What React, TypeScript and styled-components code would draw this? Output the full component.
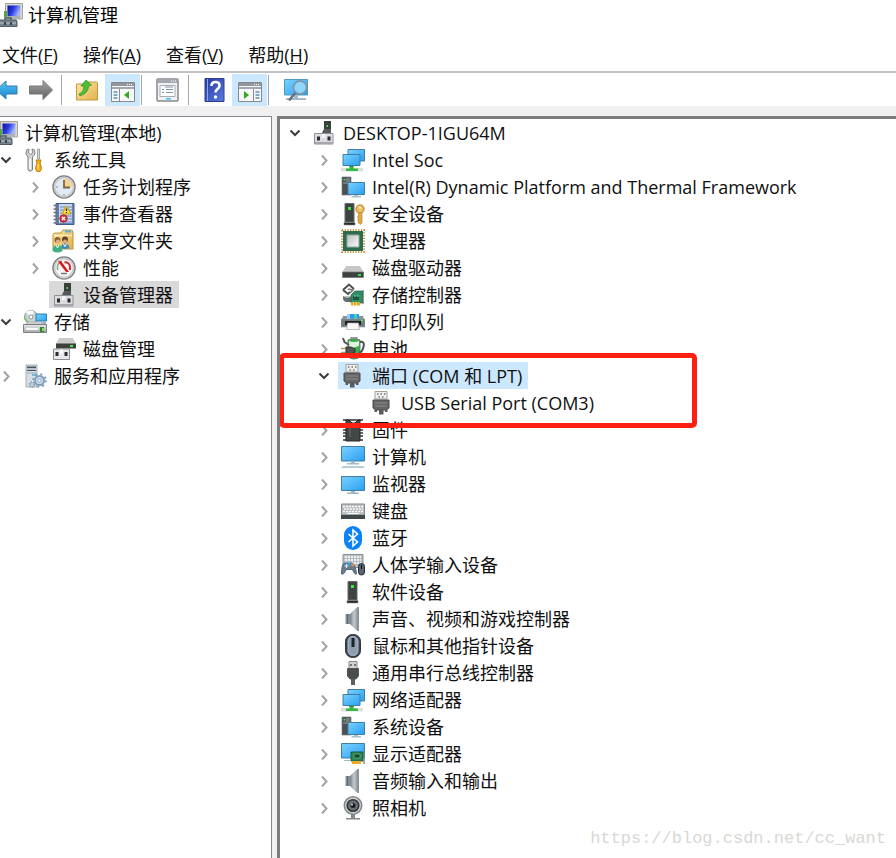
import React from 'react';
import styled, { createGlobalStyle } from 'styled-components';

const GlobalStyle = createGlobalStyle`
  *, *::before, *::after { box-sizing: border-box; }
  html, body, #root { height: 100%; }
  body {
    margin: 0;
    overflow: hidden;
    background: #fff;
    color: #101010;
    font: 18px/27px 'Open Sans', 'Noto Sans CJK SC', sans-serif;
  }
  button { font: inherit; color: inherit; border: 0; background: none; padding: 0; margin: 0; }
`;

/* ---------- layout ---------- */

const Window = styled.div`
  display: flex;
  flex-direction: column;
  height: 100vh;
  overflow: hidden;
`;

const TitleBar = styled.header`
  display: flex;
  align-items: center;
  gap: 5px;
  height: 30px;
  flex: none;
  margin-left: -1px;
`;

const Title = styled.h1`
  margin: 0;
  font-size: 18px;
  font-weight: 400;
  color: #000;
`;

const MenuBar = styled.nav`
  display: flex;
  align-items: center;
  gap: 25px;
  flex: none;
  height: 43px;
  padding: 9px 2px 0;
  border-bottom: 2px solid #c2c2c2;
`;

const MenuButton = styled.button`
  white-space: nowrap;
`;

const ToolBar = styled.div`
  display: flex;
  align-items: center;
  flex: none;
  height: 33px;
  background: #fff;
`;

const ToolButton = styled.button<{ $active?: boolean; $wide?: boolean }>`
  display: flex;
  align-items: center;
  justify-content: center;
  width: ${p => (p.$wide ? 39 : 35)}px;
  height: 32px;
  background: ${p => (p.$active ? '#cce8ff' : 'transparent')};
`;

const Separator = styled.span<{ $before?: number; $after?: number }>`
  width: 1px;
  height: 30px;
  margin: 0 ${p => p.$after ?? 0}px 0 ${p => p.$before ?? 0}px;
  background: #a6a6a6;
`;

const NavGroup = styled.div`
  display: flex;
  gap: 10px;
  margin-left: -5px;
  align-items: center;
`;

const NavButton = styled.button`
  display: flex;
  width: 24px;
  height: 32px;
  align-items: center;
`;

const Body = styled.div`
  display: flex;
  flex: 1;
  min-height: 0;
  padding-top: 10px;
  gap: 5px;
  background: #f0f0f0;
`;

const SidePane = styled.aside`
  flex: none;
  width: 272px;
  overflow: hidden;
  background: #fff;
  border-top: 1px solid #828790;
  border-right: 1px solid #828790;
  padding-top: 2px;
`;

const MainPane = styled.main`
  flex: 1;
  min-width: 0;
  overflow: hidden;
  position: relative;
  background: #fff;
  border: solid #7c7c7c;
  border-width: 3px 0 0 3px;
`;

const Tree = styled.ul<{ $scrolled?: boolean }>`
  list-style: none;
  margin: 0 0 0 ${p => (p.$scrolled ? -37 : 1)}px;
  padding: 0;
`;

const SubTree = styled.ul`
  list-style: none;
  margin: 0;
  padding: 0 0 0 29px;
`;

const Node = styled.li`
  position: relative;
`;

const Row = styled.div`
  display: flex;
  height: 27px;
`;

const Toggle = styled.button`
  display: flex;
  align-items: center;
  justify-content: center;
  width: 28px;
  height: 27px;
  flex: none;
`;

const ToggleSpace = styled.span`
  width: 28px;
  flex: none;
`;

const Item = styled.button<{ $tint?: string }>`
  display: flex;
  align-items: center;
  gap: 7px;
  height: 27px;
  padding: 0 6px 0 3px;
  white-space: nowrap;
  background: ${p => p.$tint ?? 'transparent'};
`;

const Label = styled.span`
  padding-top: 2px;
`;

const Callout = styled.span`
  position: absolute;
  top: -9px;
  left: -31px;
  width: 418px;
  height: 75px;
  border: 5px solid #ff2012;
  border-radius: 5px;
  pointer-events: none;
  z-index: 1;
`;

const Watermark = styled.span`
  position: absolute;
  right: 10px;
  bottom: 6px;
  font: 17px/27px 'Liberation Mono', monospace;
  color: #d8d8d4;
`;

const Svg = styled.svg`
  display: block;
  flex: none;
`;

/* ---------- drawings ---------- */

const Pic = ({ children }: { children: React.ReactNode }) => (
  <Svg width="24" height="24" viewBox="0 0 24 24" aria-hidden="true">{children}</Svg>
);

const Gradients = () => (
  <Svg width="0" height="0" aria-hidden="true">
    <defs>
      <linearGradient id="screen" x1="0" y1="0" x2="1" y2="1"><stop stopColor="#7ad2ff" /><stop offset="1" stopColor="#2a9ff2" /></linearGradient>
      <linearGradient id="deep" x1="0" y1="0" x2="1" y2="0.4"><stop stopColor="#0a12a0" /><stop offset=".5" stopColor="#2a3ae0" /><stop offset="1" stopColor="#a9b8ff" /></linearGradient>
      <linearGradient id="metal" x1="0" y1="0" x2="0" y2="1"><stop stopColor="#e6e8ea" /><stop offset="1" stopColor="#a4a8ac" /></linearGradient>
      <linearGradient id="silver" x1="0" y1="0" x2="1" y2="1"><stop stopColor="#b9bcbe" /><stop offset=".6" stopColor="#e3e4e5" /><stop offset="1" stopColor="#f4f4f4" /></linearGradient>
      <linearGradient id="cone" x1="0" y1="0" x2="1" y2="0"><stop stopColor="#77828c" /><stop offset=".5" stopColor="#c3c9ce" /><stop offset="1" stopColor="#8b949c" /></linearGradient>
      <linearGradient id="gold" x1="0" y1="0" x2="1" y2="1"><stop stopColor="#ffe9a0" /><stop offset="1" stopColor="#e3b04b" /></linearGradient>
      <linearGradient id="blue" x1="0" y1="0" x2="0" y2="1"><stop stopColor="#5cc6f5" /><stop offset="1" stopColor="#1484d0" /></linearGradient>
      <linearGradient id="gray" x1="0" y1="0" x2="0" y2="1"><stop stopColor="#a8a8a8" /><stop offset="1" stopColor="#5e5e5e" /></linearGradient>
      <linearGradient id="book" x1="0" y1="0" x2="1" y2="1"><stop stopColor="#2438a0" /><stop offset="1" stopColor="#5d7de0" /></linearGradient>
    </defs>
  </Svg>
);

const Chevron = ({ open }: { open?: boolean }) => (
  <Svg width="12" height="12" viewBox="0 0 12 12" aria-hidden="true">
    {open
      ? <path d="M1.5 3.500 6 8l4.500-4.500" fill="none" stroke="#3c3c3c" strokeWidth="2" />
      : <path d="M4 1.500 8.500 6.500 4 11.500" fill="none" stroke="#a3a3a3" strokeWidth="2" />}
  </Svg>
);

const ComputerIcon = () => (
  <Pic>
    <path d="M6.500 .500h17v15.500h-17z" fill="#d8d8cf" stroke="#a4a49a" />
    <path d="M8.500 2.500h13v11h-13z" fill="url(#deep)" />
    <path d="M5 8h3v6H5z" fill="#53a540" />
    <path d="M10 13h8v-2l3 2v3H9z" fill="#aab2b8" />
    <path d="M1 17h16l1 1v5.500H0V18z" fill="#77838c" stroke="#4f5a62" />
    <path d="M6 17v-2h6v2" fill="none" stroke="#4f5a62" strokeWidth="1.500" />
    <path d="M1 20h16" stroke="#b9c3ca" /><path d="M6 19v3M12 19v3" stroke="#394148" strokeWidth="2" />
  </Pic>
);

const ToolsIcon = () => (
  <Pic>
    <path d="M6 1 3.500 2 3 6l2 3v13q2 2.500 4.500 0V9l2.500-3-.5-4L9 1l.5 4-2 1.500L5.500 5z" fill="#d3d5d6" stroke="#7d8184" />
    <path d="M7 11v10" stroke="#fff" strokeWidth="1.500" />
    <path d="M14.500 1h2v10h-2z" fill="#d5dade" stroke="#8c9297" strokeWidth=".8" />
    <path d="M13 12h5l-1 3 1.500 5q-.5 4-3 4t-3-4l1.500-5z" fill="#f6b21a" stroke="#c27c08" />
    <path d="M15 16v5" stroke="#ffe487" />
  </Pic>
);

const ClockIcon = () => (
  <Pic>
    <circle cx="12" cy="12" r="11" fill="#dfeaf5" stroke="#7d7f81" strokeWidth="1.500" />
    <circle cx="12" cy="12" r="9.500" fill="none" stroke="#c9cbcd" strokeWidth="1.800" />
    <path d="M12 3.500a8.500 8.500 0 0 1 8.500 8.500H12z" fill="#f5d394" />
    <path d="M12 5v7.500h6" fill="none" stroke="#7b6540" strokeWidth="1.800" />
    <path d="M12 19v1.500M4 12h1.500" stroke="#6b7e92" />
  </Pic>
);

const EventIcon = () => (
  <Pic>
    <path d="M4 1.500h18v21H4z" fill="#6684b7" stroke="#405b8c" />
    <path d="M7 2h13v19H7z" fill="#c6d6ed" />
    <path d="M8 5h12M8 8h12M8 11h12M8 14h12M8 17h12M8 20h12" stroke="#7490bf" />
    <path d="M1.500 3.500h5M1.500 7h5M1.500 10.500h5M1.500 14h5M1.500 17.500h5M1.500 21h5" stroke="#6f7478" strokeWidth="1.500" />
    <path d="m14.500 4 4.500 8h-9z" fill="#ffde3b" stroke="#c3a100" />
    <path d="M14.500 6.500v2.500M14.500 10v1" stroke="#302800" strokeWidth="1.300" />
    <circle cx="11.500" cy="16.500" r="3.700" fill="#dd3a43" stroke="#b51e28" />
    <path d="m10 15 3 3m0-3-3 3" stroke="#fff" strokeWidth="1.300" />
  </Pic>
);

const SharedIcon = () => (
  <Pic>
    <path d="M1 6q0-2 2-2h6l2-3h8q2 0 2 2v17H1z" fill="url(#gold)" stroke="#bd9143" />
    <path d="M13 2.500h6" stroke="#4faee5" strokeWidth="2" />
    <path d="M2 6.500h18" stroke="#fff2c6" />
    <circle cx="5.500" cy="11" r="3" fill="#875f3c" /><circle cx="6" cy="12.500" r="2" fill="#e4b38b" />
    <circle cx="13" cy="10.500" r="3" fill="#604026" /><circle cx="13" cy="12.500" r="2" fill="#e0aa80" />
    <path d="M9 19q0-4.500 4-4.500t4.500 4.500q-4 2-8.500 0z" fill="#3d8fba" /><path d="M.5 22q0-6 5-6t5 6q-5 3-10 0z" fill="#3fae84" />
    <path d="m4 16 1.500 3L7 16m4.500-1 1.500 2.500 1.500-2.500" fill="none" stroke="#fff" />
  </Pic>
);

const GaugeIcon = () => (
  <Pic>
    <circle cx="12" cy="12" r="11" fill="#f7f8f6" stroke="#7d7f81" strokeWidth="1.500" />
    <circle cx="12" cy="12" r="9.500" fill="none" stroke="#c9cbcd" strokeWidth="1.800" />
    <path d="M5.500 14V9.500Q7 6 10 5.500" fill="none" stroke="#86a58a" strokeWidth="1.500" />
    <path d="M12.500 6q5 .5 5.500 4.500V14" fill="none" stroke="#d4282d" strokeWidth="2" />
    <path d="m6 5.500 3-.5 8 11h-3z" fill="#df161b" />
    <path d="M9 17.500h6" stroke="#777" strokeWidth="1.500" />
  </Pic>
);

const DeviceIcon = () => (
  <Pic>
    <path d="M12 0h7v13h-7z" fill="#39413d" /><path d="M10 11.500 12 8h7v5h-9z" fill="#565b59" />
    <path d="M14.500 4h1.500v2h-1.500z" fill="#46e353" />
    <path d="M2.500 12.500h18.500v10.500H2.500z" fill="#dcdce1" stroke="#909198" />
    <path d="M3 22h18" stroke="#a5a6ae" strokeWidth="2" />
    <path d="M5 15.500h3v4H5zM15.500 15.500h3v4h-3z" fill="#2a2c2e" />
    <path d="M10 13v4h3.500v-4" fill="#f4f4f6" />
  </Pic>
);

const StorageIcon = () => (
  <Pic>
    <circle cx="8" cy="7" r="6.500" fill="#cbd5d5" stroke="#8d9694" /><path d="M8 7 3 2.500A6.500 6.500 0 0 1 11 1.500z" fill="#fff" />
    <circle cx="8" cy="7" r="2" fill="#fff" stroke="#8d9694" /><path d="M2 8q2 5 5 5" fill="none" stroke="#76cd70" strokeWidth="2" />
    <path d="M13 4h10.500v7H13z" fill="url(#screen)" stroke="#277fad" /><path d="M14 13h9" stroke="#1c6f96" />
    <path d="m3 14 2-2h13l5 2z" fill="#e7e9ea" stroke="#999" strokeWidth=".7" />
    <path d="M.5 14.500h23v8H.5z" fill="url(#metal)" stroke="#7d8082" /><path d="M3 19h12" stroke="#f9f9f9" strokeWidth="2" />
    <path d="M17 17h4v5h-4z" fill="#37872c" /><path d="M19 18h2v3h-2z" fill="#75dd50" />
  </Pic>
);

const DiskManageIcon = () => (
  <Pic>
    <path d="M7 1h14l3 6H4z" fill="#c9cbcc" />
    <path d="M4 6.500h20v5H4z" fill="#3b403d" /><path d="M18 8h3v2h-3z" fill="#3ded46" />
    <path d="M1.500 12h16v10.500h-16z" fill="#e9e9ed" stroke="#8a8b90" />
    <path d="M3.500 15h3v4h-3zM12.500 15h3v4h-3z" fill="#2a2c2e" /><path d="M8 12.500v4h3v-4" fill="#fff" />
  </Pic>
);

const ServicesIcon = () => (
  <Pic>
    <path d="M3 1h11v22H3z" fill="#d6dfe5" stroke="#93a0a8" strokeWidth=".8" />
    <path d="M4 2.500h9v1.500H4zM4 6h9v1H4z" fill="#45525b" /><path d="M4 5h9M4 9h9" stroke="#9aa8b1" />
    <path d="M9 10h4v2H9z" fill="#78b6d9" />
    <circle cx="16.500" cy="16.500" r="4.500" fill="#d0e3f2" stroke="#7f9fba" strokeWidth="2" />
    <circle cx="16.500" cy="16.500" r="6.300" fill="none" stroke="#7f9fba" strokeWidth="2" strokeDasharray="2 2.950" />
    <circle cx="16.500" cy="16.500" r="1.800" fill="#fff" stroke="#7f9fba" />
    <circle cx="9" cy="20.500" r="2.500" fill="#b4cee1" stroke="#7f9fba" strokeDasharray="1.500 1" strokeWidth="1.500" />
  </Pic>
);

const NetworkIcon = () => (
  <Pic>
    <path d="M7 1.500h16.500V13H7z" fill="url(#screen)" stroke="#417da2" />
    <path d="M2 6.500h17v11H2z" fill="url(#screen)" stroke="#417da2" />
    <path d="M0 20h22v3.500H0z" fill="#dcdfdc" /><path d="M8.500 18h4v2.500H17V23H5v-2.500h3.500z" fill="#35ba40" />
    <path d="M8.500 18h4v1h-4z" fill="#268c30" />
  </Pic>
);

const SystemIcon = () => (
  <Pic>
    <path d="M1 2h9v18H1z" fill="#4b5054" stroke="#74797c" strokeWidth=".7" /><path d="M2.500 4h2v1.500h-2z" fill="#46e353" />
    <path d="M5 4h4M5 6h4M2 8h7" stroke="#a0a5a8" />
    <path d="M7 7.500h16.500v12H7z" fill="url(#screen)" stroke="#417da2" /><path d="M13 20h4v1h3v1.500h-9.500V21H13z" fill="#a5bfd1" />
  </Pic>
);

const Tower = ({ x }: { x: number }) => (
  <g transform={`translate(${x} 0)`}>
    <path d="M1 1.500h9V20H1z" fill="#3e4240" stroke="#656967" /><path d="M0 20.500h11V23H0z" fill="#24282a" stroke="#888" strokeWidth=".6" />
    <path d="M4 5h3v3H4z" fill="#38ef38" />
  </g>
);

const SecurityIcon = () => (
  <Pic>
    <Tower x={3} />
    <circle cx="19" cy="7" r="3.900" fill="#eec165" stroke="#cd983c" strokeWidth="1.500" /><circle cx="19" cy="5.500" r="1" fill="#fff" />
    <path d="M17.500 10.500h3.500V21L19 22.500 17.500 21z" fill="#e2ab42" stroke="#b78628" strokeWidth=".7" /><path d="M16 15h2M16 18h2" stroke="#c3922b" />
  </Pic>
);

const SoftwareIcon = () => <Pic><Tower x={6} /></Pic>;

const CpuIcon = () => (
  <Pic>
    <rect x="1" y="1" width="22" height="22" fill="none" stroke="#c69a4d" strokeWidth="2" strokeDasharray="1.300 1.400" />
    <path d="M2 2h20v20H2z" fill="#2f6c4e" />
    <path d="M6 6h12v12H6z" fill="url(#silver)" stroke="#8cad9b" />
  </Pic>
);

const DiskIcon = () => (
  <Pic>
    <path d="M5 10h14l3.500 6h-21z" fill="#c5c7c9" /><path d="M1.500 16h21v5.500h-21z" fill="#3d4140" stroke="#707373" strokeWidth=".7" />
    <path d="M17 18h3v2h-3z" fill="#31e342" />
  </Pic>
);

const ControllerIcon = () => (
  <Pic>
    <path d="m2 7 6-5.500L13 6M2 7l5 4 2-2" fill="none" stroke="#4d5151" strokeWidth="2" /><path d="m7 6 5 1-3 3" fill="none" stroke="#777" strokeWidth="1.500" />
    <path d="M2 13q4 3 9 0v6H5q-3-1-3-3z" fill="#666b6b" /><path d="M3 13.500h8" stroke="#bfc5c5" />
    <path d="M10 12l4-4h8v12H10z" fill="#2f9068" stroke="#246246" strokeWidth=".7" /><path d="M12 13h6v4h-6z" fill="#19593f" />
    <path d="M14 12v2M17 12v2" stroke="#99d1b1" /><path d="M22.500 7v14" stroke="#999" /><path d="M10 19h9v3.500h-9z" fill="#e5a527" />
    <path d="M12.500 19v4m3-4v4" stroke="#fff0be" strokeWidth=".7" />
  </Pic>
);

const PrinterIcon = () => (
  <Pic>
    <path d="M6 4h12v5H6z" fill="#2c9af2" /><path d="M13 4h3v5h-3z" fill="#3fd4ae" /><path d="M6 4h3v5H6z" fill="#92cfff" />
    <path d="M2 6h4v3H1zM18 6h4l1 3h-5z" fill="#8b9093" /><path d="M0 9h24v8H0z" fill="#73797c" stroke="#999fa2" strokeWidth=".6" />
    <path d="M4 11h16v4H4z" fill="#1b1e20" /><path d="m6.500 13-1 6.500h13l-1-6.500z" fill="#f8f8f8" stroke="#a4a9ac" strokeWidth=".7" /><path d="M20 9.500h2v2h-2z" fill="#49ec50" />
  </Pic>
);

const BatteryIcon = () => (
  <Pic>
    <path d="M10 0h6v2.500h-6z" fill="#b8bebe" stroke="#767c7c" /><path d="M7 3q6-2.500 12 0v17q-6 4-12 0z" fill="#35b04a" stroke="#6b7c70" />
    <path d="M8 4q5 2 10 0v5l-10 3z" fill="#dff2df" /><path d="M19 5q5-1 3.500 5T18 15" fill="none" stroke="#4c5554" strokeWidth="2" />
    <path d="M2 1l1.500 4L8 8" fill="none" stroke="#555" strokeWidth="2" />
    <path d="M0 11.500h5M0 15.500h5" stroke="#b29b60" strokeWidth="1.500" /><path d="M5 10h5l4 2v3l-4 2H5z" fill="#4f5555" stroke="#2d3232" />
  </Pic>
);

const PortIcon = () => (
  <Pic>
    <path d="M5 .500h12V8H5z" fill="#eeeeec" stroke="#a1a19e" /><path d="M7 3h1.500M10.500 3H12M14 3h1.500M8.500 6H10M12 6h1.500" stroke="#777" strokeWidth="1.300" />
    <path d="M3 9h16v8l-3 2H6l-3-2z" fill="#666" stroke="#4a4a4a" /><path d="M5 12h12M5 15h12" stroke="#8a8a8a" />
    <path d="M4.500 18h2.500v3H4.500zM15 18h2.500v3H15zM9 18.500h4.500v5H9z" fill="#5a5a5a" />
  </Pic>
);

const ChipIcon = () => (
  <Pic>
    <path d="M2 2h20M2 6h20M2 9h20M2 12h20M2 15h20M2 18h20M2 22h20" stroke="#333" strokeWidth="1.500" />
    <path d="M5 2h3l3 3h3l3-3h2v21H5z" fill="#444748" stroke="#242626" /><path d="M9 8v11" stroke="#6d7070" />
  </Pic>
);

const PcIcon = () => (
  <Pic>
    <path d="M.5 1.500h23v14.500H.5z" fill="url(#screen)" stroke="#417da2" /><path d="M10 16.500h4V18h4v1.500H6V18h4z" fill="#a4bacb" />
    <path d="M2 21h20l2 2H0z" fill="#b8ccda" />
  </Pic>
);

const MonitorIcon = () => (
  <Pic>
    <path d="M.5 4.500h23v14H.5z" fill="url(#screen)" stroke="#417da2" /><path d="M10 19h4v1.500h4V22H6v-1.500h4z" fill="#9eb5c5" />
  </Pic>
);

const KeyboardIcon = () => (
  <Pic>
    <path d="M.5 5h23v11H.5z" fill="#b9bdc0" stroke="#858a8d" /><path d="M0 16h24v4H0z" fill="#41484c" />
    <path d="M2 7.500h20M3 10h19M2 12.500h20" stroke="#f9f9f9" strokeWidth="1.500" strokeDasharray="2 1" /><path d="M6 14.500h12" stroke="#fff" />
  </Pic>
);

const BluetoothIcon = () => (
  <Pic>
    <rect x="3" y="0" width="18" height="24" rx="9" fill="#0b82f5" />
    <path d="m7.500 8 9 8-4.500 4V4l4.500 4-9 8" fill="none" stroke="#fff" strokeWidth="1.600" />
  </Pic>
);

const HidIcon = () => (
  <Pic>
    <path d="M2 1.500h20v13H2z" fill="#b7bec3" stroke="#899197" /><path d="M4 4h16M4 7h16M4 10h16" stroke="#fff" strokeWidth="1.500" strokeDasharray="2 1" />
    <path d="M.5 21q0-10 3-11h7q4 1 5 11-2 1-4-4.500H5q-2 5.500-4.500 4.500z" fill="#667c91" stroke="#54677a" /><path d="M5.500 11v4M3.500 13h4" stroke="#e6eef2" />
    <circle cx="8" cy="11" r="1.500" fill="#2ba6f4" /><circle cx="11.500" cy="12" r="1.500" fill="#f18c45" />
    <rect x="17.500" y="10.500" width="6" height="11.500" rx="3" fill="#586674" stroke="#24292e" /><path d="M20.500 12v4" stroke="#111" />
  </Pic>
);

const SpeakerIcon = () => (
  <Pic>
    <path d="M4.500 7h6v10h-6z" fill="#84919c" /><path d="M6.500 7v10" stroke="#5a6670" /><path d="m9 7 6-6h2v22h-2l-6-6z" fill="url(#cone)" /><path d="M16 0h2v24h-2z" fill="#8a949c" />
  </Pic>
);

const MouseIcon = () => (
  <Pic>
    <rect x="4.500" y=".5" width="15" height="23" rx="7" fill="#3b444c" stroke="#2c3339" /><rect x="7" y="2.500" width="10" height="19" rx="4.500" fill="#8ea0b0" stroke="#aebbc6" />
    <path d="M12 4v9" stroke="#1b2228" strokeWidth="3" />
  </Pic>
);

const UsbIcon = () => (
  <Pic>
    <path d="M8 .500h8V8H8z" fill="#d2d4d4" stroke="#888" /><path d="M10 3v2M14 3v2" stroke="#555" strokeWidth="1.500" />
    <path d="M6.500 7.500h11V15L15 18H9l-2.500-3z" fill="#4b4e4f" stroke="#555" /><path d="M10 18h4v6h-4z" fill="#5a5e5f" />
  </Pic>
);

const DisplayAdapterIcon = () => (
  <Pic>
    <path d="M.5 1.500h23v14.500H.5z" fill="url(#screen)" stroke="#417da2" /><path d="M10 10h12v9H10z" fill="#258653" stroke="#195e3a" />
    <path d="M13 12h6v4h-6z" fill="#17482e" stroke="#7bb391" strokeWidth=".7" /><path d="M23 8v14" stroke="#787c7c" strokeWidth="1.300" /><path d="M11 19h9v3h-9z" fill="#eeaa28" />
    <path d="M3 18.500h6" stroke="#9fb7c4" />
  </Pic>
);

const CameraIcon = () => (
  <Pic>
    <circle cx="12" cy="9.500" r="8.700" fill="#d0d2d3" stroke="#85888a" strokeWidth="1.600" /><circle cx="12" cy="9.500" r="5.800" fill="#6a7075" stroke="#33373a" strokeWidth="1.600" />
    <circle cx="12" cy="9.500" r="2.500" fill="#151c26" /><circle cx="11" cy="8.500" r="1" fill="#dceaff" /><path d="M10 18h4v4h5v1.500H5V22h5z" fill="#84888a" />
  </Pic>
);

const BackIcon = () => <Pic><path d="M1 12 11 3v5h11v8H11v5z" fill="url(#blue)" stroke="#337ba7" /></Pic>;
const ForwardIcon = () => <Pic><path d="M23.500 12 14 2.500V8H.5v8H14v5.500z" fill="url(#gray)" stroke="#777" /></Pic>;
const FolderUpIcon = () => (
  <Pic>
    <path d="M.5 6h8l2-2h10q1 0 1 1v17H.5z" fill="url(#gold)" stroke="#c29945" />
    <path d="M3 16q5-2 5-8H5L10 2l5.500 5-3 1q0 7-8.500 10z" fill="#4ac13c" stroke="#258b20" strokeWidth=".7" />
  </Pic>
);
const PaneIcon = ({ flip }: { flip?: boolean }) => (
  <Pic>
    <path d="M.5 4.500h23v19H.5z" fill="#f8f8f8" stroke="#868a90" /><path d="M1 5h22v3H1z" fill="#91959c" /><path d="M16 6.500h6" stroke="#fff" strokeDasharray="1 1" />
    <path d="M1 10h22" stroke="#a3a7ac" strokeWidth="2" />
    <path d={flip ? 'M15.500 11v12' : 'M8.500 11v12'} stroke="#868a90" />
    <path d={flip ? 'M17.500 14h4M17.500 17h4M17.500 20h4' : 'M2.500 14h4M2.500 17h4M2.500 20h4'} stroke="#5a8fc2" strokeWidth="1.500" />
    <path d={flip ? 'M6 13v8l5-4z' : 'M18 13v8l-5-4z'} fill="#35a925" />
  </Pic>
);
const PropsIcon = () => (
  <Pic>
    <rect x="1" y="1" width="21" height="22" rx="1" fill="#f0f1f3" stroke="#85898f" strokeWidth="1.500" /><path d="M2 3.500h19" stroke="#a3a7ae" strokeWidth="3" /><path d="M15 3h5" stroke="#fff" strokeDasharray="1 1" />
    <path d="M4 7.500h15v11H4z" fill="#fff" stroke="#a9adb3" /><path d="M6 11.500h2m2 0h7M6 14.500h2m2 0h7M9 9h8" stroke="#7d95ac" />
    <path d="M10 20h5v1.500h-5z" fill="#38c4f0" />
  </Pic>
);
const HelpIcon = () => (
  <Pic>
    <path d="M2 .500h19v23H2z" fill="url(#book)" stroke="#2b3c91" /><path d="M4.500 1v22" stroke="#92a7e8" />
    <path d="M8.500 8q0-4 4-4t4 3.500q0 2-2 3.500t-2 3.500" fill="none" stroke="#fff" strokeWidth="2.600" /><circle cx="12.500" cy="19" r="1.700" fill="#fff" />
  </Pic>
);
const ScanIcon = () => (
  <Pic>
    <path d="M.5 1.500h23V17H.5z" fill="url(#screen)" stroke="#4b9bc5" /><path d="M10 17h4v3h8v2H2v-2h8z" fill="#a5bac7" />
    <path d="m12 14-7 8.500" stroke="#65727b" strokeWidth="2.500" /><circle cx="16" cy="9.500" r="6.500" fill="#8ed6fa" stroke="#8292a0" strokeWidth="1.500" />
  </Pic>
);

/* ---------- tree ---------- */

type NodeData = {
  label: string;
  icon: () => React.ReactElement;
  open?: boolean;
  leaf?: boolean;
  tint?: string;
  marked?: boolean;
  children?: NodeData[];
};

const consoleTree: NodeData[] = [{
  label: '计算机管理(本地)', icon: ComputerIcon, leaf: true, children: [
    {
      label: '系统工具', icon: ToolsIcon, open: true, children: [
        { label: '任务计划程序', icon: ClockIcon },
        { label: '事件查看器', icon: EventIcon },
        { label: '共享文件夹', icon: SharedIcon },
        { label: '性能', icon: GaugeIcon },
        { label: '设备管理器', icon: DeviceIcon, leaf: true, tint: '#d9d9d9' },
      ],
    },
    { label: '存储', icon: StorageIcon, open: true, children: [{ label: '磁盘管理', icon: DiskManageIcon, leaf: true }] },
    { label: '服务和应用程序', icon: ServicesIcon },
  ],
}];

const deviceTree: NodeData[] = [{
  label: 'DESKTOP-1IGU64M', icon: DeviceIcon, open: true, children: [
    { label: 'Intel Soc', icon: NetworkIcon },
    { label: 'Intel(R) Dynamic Platform and Thermal Framework', icon: SystemIcon },
    { label: '安全设备', icon: SecurityIcon },
    { label: '处理器', icon: CpuIcon },
    { label: '磁盘驱动器', icon: DiskIcon },
    { label: '存储控制器', icon: ControllerIcon },
    { label: '打印队列', icon: PrinterIcon },
    { label: '电池', icon: BatteryIcon },
    {
      label: '端口 (COM 和 LPT)', icon: PortIcon, open: true, tint: '#cce8ff', marked: true,
      children: [{ label: 'USB Serial Port (COM3)', icon: PortIcon, leaf: true }],
    },
    { label: '固件', icon: ChipIcon },
    { label: '计算机', icon: PcIcon },
    { label: '监视器', icon: MonitorIcon },
    { label: '键盘', icon: KeyboardIcon },
    { label: '蓝牙', icon: BluetoothIcon },
    { label: '人体学输入设备', icon: HidIcon },
    { label: '软件设备', icon: SoftwareIcon },
    { label: '声音、视频和游戏控制器', icon: SpeakerIcon },
    { label: '鼠标和其他指针设备', icon: MouseIcon },
    { label: '通用串行总线控制器', icon: UsbIcon },
    { label: '网络适配器', icon: NetworkIcon },
    { label: '系统设备', icon: SystemIcon },
    { label: '显示适配器', icon: DisplayAdapterIcon },
    { label: '音频输入和输出', icon: SpeakerIcon },
    { label: '照相机', icon: CameraIcon },
  ],
}];

const TreeNode = ({ node }: { node: NodeData }) => {
  const Icon = node.icon;
  return (
    <Node role="treeitem" aria-expanded={node.leaf ? undefined : !!node.open}>
      <Row>
        {node.leaf
          ? <ToggleSpace />
          : <Toggle aria-label={`${node.open ? '折叠' : '展开'} ${node.label}`}><Chevron open={node.open} /></Toggle>}
        <Item $tint={node.tint}>
          <Icon />
          <Label>{node.label}</Label>
        </Item>
      </Row>
      {node.children && (
        <SubTree role="group">
          {node.children.map(child => <TreeNode key={child.label} node={child} />)}
        </SubTree>
      )}
      {node.marked && <Callout />}
    </Node>
  );
};

const menus = [['文件', 'F'], ['操作', 'A'], ['查看', 'V'], ['帮助', 'H']];

export default function App() {
  return (
    <Window>
      <GlobalStyle />
      <Gradients />
      <TitleBar>
        <ComputerIcon />
        <Title>计算机管理</Title>
      </TitleBar>
      <MenuBar>
        {menus.map(([name, key]) => (
          <MenuButton key={key}>{name}(<u>{key}</u>)</MenuButton>
        ))}
      </MenuBar>
      <ToolBar role="toolbar">
        <NavGroup>
          <NavButton aria-label="后退"><BackIcon /></NavButton>
          <NavButton aria-label="前进"><ForwardIcon /></NavButton>
        </NavGroup>
        <Separator $before={8} $after={8} />
        <ToolButton aria-label="上移一级"><FolderUpIcon /></ToolButton>
        <ToolButton $active aria-label="显示/隐藏控制台树"><PaneIcon /></ToolButton>
        <Separator $before={1} $after={8} />
        <ToolButton aria-label="属性"><PropsIcon /></ToolButton>
        <Separator $before={3} $after={8} />
        <ToolButton aria-label="帮助"><HelpIcon /></ToolButton>
        <ToolButton $active aria-label="显示/隐藏操作窗格"><PaneIcon flip /></ToolButton>
        <Separator $before={1} $after={7} />
        <ToolButton $wide aria-label="扫描检测硬件改动"><ScanIcon /></ToolButton>
      </ToolBar>
      <Body>
        <SidePane>
          <Tree role="tree" $scrolled>{consoleTree.map(n => <TreeNode key={n.label} node={n} />)}</Tree>
        </SidePane>
        <MainPane>
          <Tree role="tree">{deviceTree.map(n => <TreeNode key={n.label} node={n} />)}</Tree>
          <Watermark>https://blog.csdn.net/cc_want</Watermark>
        </MainPane>
      </Body>
    </Window>
  );
}
